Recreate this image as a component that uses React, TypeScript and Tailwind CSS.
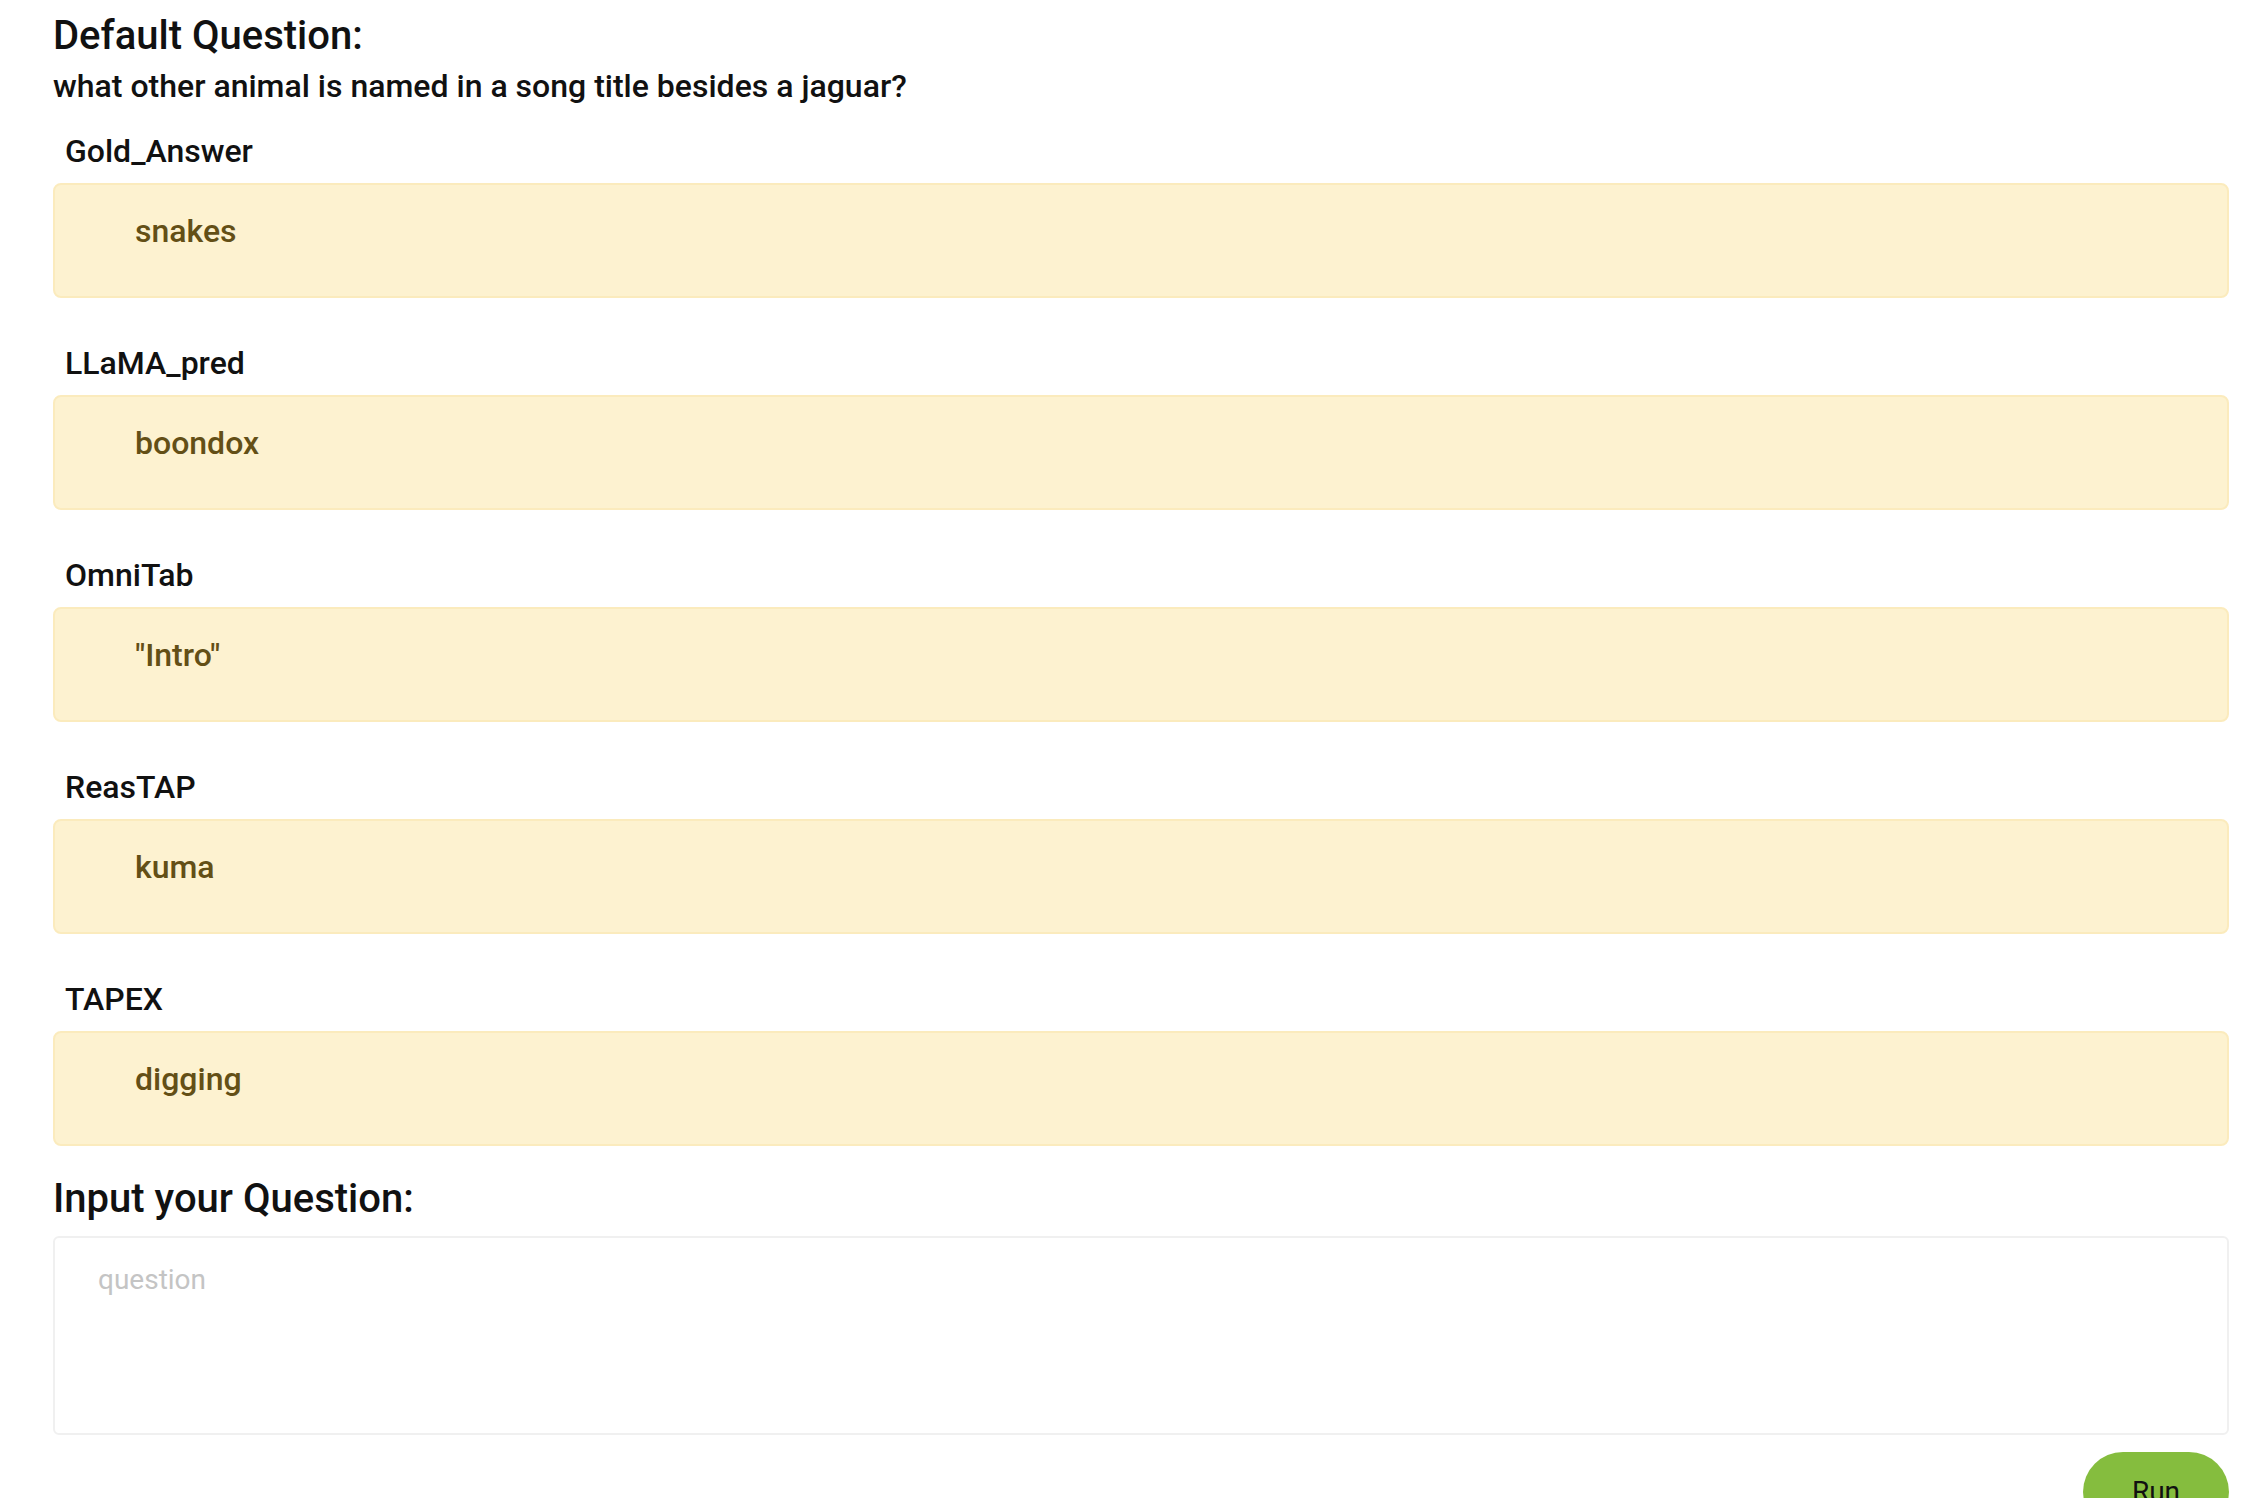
const answers = [
  { label: "Gold_Answer", value: "snakes" },
  { label: "LLaMA_pred", value: "boondox" },
  { label: "OmniTab", value: '"Intro"' },
  { label: "ReasTAP", value: "kuma" },
  { label: "TAPEX", value: "digging" },
];

export default function App() {
  return (
    <div className="min-h-screen bg-white pl-[53px] pr-[27px] pt-[12px] font-['Roboto',_'Liberation_Sans',_sans-serif] text-[#111]">
      {/* default question */}
      <h2 className="text-[40px] leading-[48px] font-medium">Default Question:</h2>
      <p className="mt-[7px] text-[32px] leading-[38px] font-medium">
        what other animal is named in a song title besides a jaguar?
      </p>

      {/* answers */}
      <div className="flex flex-col">
        {answers.map(({ label, value }, i) => (
          <div key={label} className={i === 0 ? "mt-[27px]" : "mt-[46px]"}>
            <div className="pl-[12px] text-[32px] leading-[38px] font-medium">{label}</div>
            <div className="mt-[13px] h-[115px] rounded-[8px] border-2 border-[#fbebbd] bg-[#fdf2d0] pl-[80px] pt-[27px] text-[32px] leading-[38px] font-medium text-[#634f16]">
              {value}
            </div>
          </div>
        ))}
      </div>

      {/* input */}
      <h2 className="mt-[29px] text-[40px] leading-[48px] font-medium">Input your Question:</h2>
      <textarea
        placeholder="question"
        className="mt-[13px] block h-[199px] w-full resize-none rounded-[6px] border-2 border-[#f0f0f0] bg-white pl-[43px] pt-[24px] text-[28px] leading-[36px] outline-none placeholder:text-[#c4c4c4]"
      />

      <div className="mt-[17px] flex justify-end">
        <button className="h-[80px] w-[146px] rounded-full bg-[#85bd3e] text-[28px] text-[#111]">
          Run
        </button>
      </div>
    </div>
  );
}
